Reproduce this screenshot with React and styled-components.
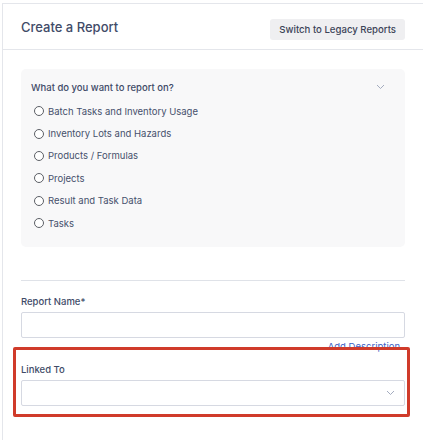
import React from "react";
import styled, { createGlobalStyle } from "styled-components";

const GlobalStyle = createGlobalStyle`
  html, body {
    margin: 0;
    padding: 0;
    background: #ffffff;
  }
  body {
    font-family: Inter, "Noto Sans", "Liberation Sans", sans-serif;
    -webkit-font-smoothing: antialiased;
  }
`;

const Frame = styled.div`
  margin: 3px 0 0 2px;
  min-height: 437px;
  border-top: 1px solid #e4e6eb;
  border-left: 1px solid #e4e6eb;
  box-sizing: border-box;
`;

const Header = styled.header`
  display: flex;
  align-items: center;
  justify-content: space-between;
  height: 45px;
  padding: 0 18px;
  border-bottom: 1px solid #e4e6eb;
`;

const Title = styled.h1`
  margin: 0;
  font-size: 13px;
  font-weight: 500;
  color: #414b68;
`;

const LegacyButton = styled.button`
  margin-top: 5px;
  height: 21px;
  padding: 0 9px;
  border: none;
  border-radius: 3px;
  background: #efeff1;
  font-family: inherit;
  font-size: 9.6px;
  font-weight: 500;
  color: #3c4458;
`;

const Body = styled.div`
  padding: 19px 18px 0 18px;
`;

const Panel = styled.section`
  background: #f8f8f9;
  border-radius: 5px;
  padding: 10px 10px 13px 10px;
`;

const PanelHead = styled.div`
  display: flex;
  align-items: center;
  justify-content: space-between;
  height: 16px;
  font-size: 9.5px;
  font-weight: 500;
  color: #414b68;
`;

const Chevron = ({ color = "#9aa3b8" }) => (
  <svg width="9" height="6" viewBox="0 0 9 6" fill="none">
    <path d="M1 1l3.5 3.5L8 1" stroke={color} strokeWidth="0.9" />
  </svg>
);

const ChevronSlot = styled.span`
  display: flex;
  margin-right: 10px;
`;

const RadioList = styled.ul`
  list-style: none;
  margin: 5px 0 0 0;
  padding: 0 0 0 3px;
`;

const RadioItem = styled.li`
  display: flex;
  align-items: center;
  gap: 4px;
  height: 22.4px;
  font-size: 9.5px;
  color: #46506c;
`;

const RadioDot = styled.span`
  width: 10px;
  height: 10px;
  box-sizing: border-box;
  border: 1px solid #5c5f66;
  border-radius: 50%;
  background: #ffffff;
  flex: none;
`;

const Divider = styled.hr`
  margin: 33px 0 0 0;
  border: none;
  border-top: 1px solid #dfe2e8;
`;

const Label = styled.label`
  display: block;
  margin: ${(p) => p.$top || 0}px 0 3px 0;
  line-height: 14px;
  font-size: 9.5px;
  font-weight: 500;
  color: #414b68;
`;

const TextInput = styled.div`
  display: flex;
  align-items: center;
  justify-content: flex-end;
  height: 26px;
  box-sizing: border-box;
  border: 1px solid #d6d9e2;
  border-radius: 2px;
  background: #ffffff;
  padding-right: 9px;
`;

const AddLink = styled.a`
  display: block;
  text-align: right;
  padding-right: 5px;
  margin-top: 3px;
  line-height: 12px;
  font-size: 9.5px;
  color: #3d63c6;
`;

const LinkedGroup = styled.div`
  position: relative;
`;

const Highlight = styled.div`
  position: absolute;
  top: -16px;
  left: -8px;
  right: -5px;
  bottom: -11px;
  border: 3px solid #d03b2a;
  border-radius: 2px;
  pointer-events: none;
`;

const options = [
  "Batch Tasks and Inventory Usage",
  "Inventory Lots and Hazards",
  "Products / Formulas",
  "Projects",
  "Result and Task Data",
  "Tasks",
];

export default function App() {
  return (
    <>
      <GlobalStyle />
      <Frame>
        <Header>
          <Title>Create a Report</Title>
          <LegacyButton>Switch to Legacy Reports</LegacyButton>
        </Header>
        <Body>
          <Panel>
            <PanelHead>
              <span>What do you want to report on?</span>
              <ChevronSlot>
                <Chevron />
              </ChevronSlot>
            </PanelHead>
            <RadioList>
              {options.map((o) => (
                <RadioItem key={o}>
                  <RadioDot />
                  {o}
                </RadioItem>
              ))}
            </RadioList>
          </Panel>
          <Divider />
          <Label $top={14}>Report Name*</Label>
          <TextInput />
          <AddLink>Add Description</AddLink>
          <LinkedGroup>
            <Label $top={10}>Linked To</Label>
            <TextInput>
              <Chevron />
            </TextInput>
            <Highlight />
          </LinkedGroup>
        </Body>
      </Frame>
    </>
  );
}
